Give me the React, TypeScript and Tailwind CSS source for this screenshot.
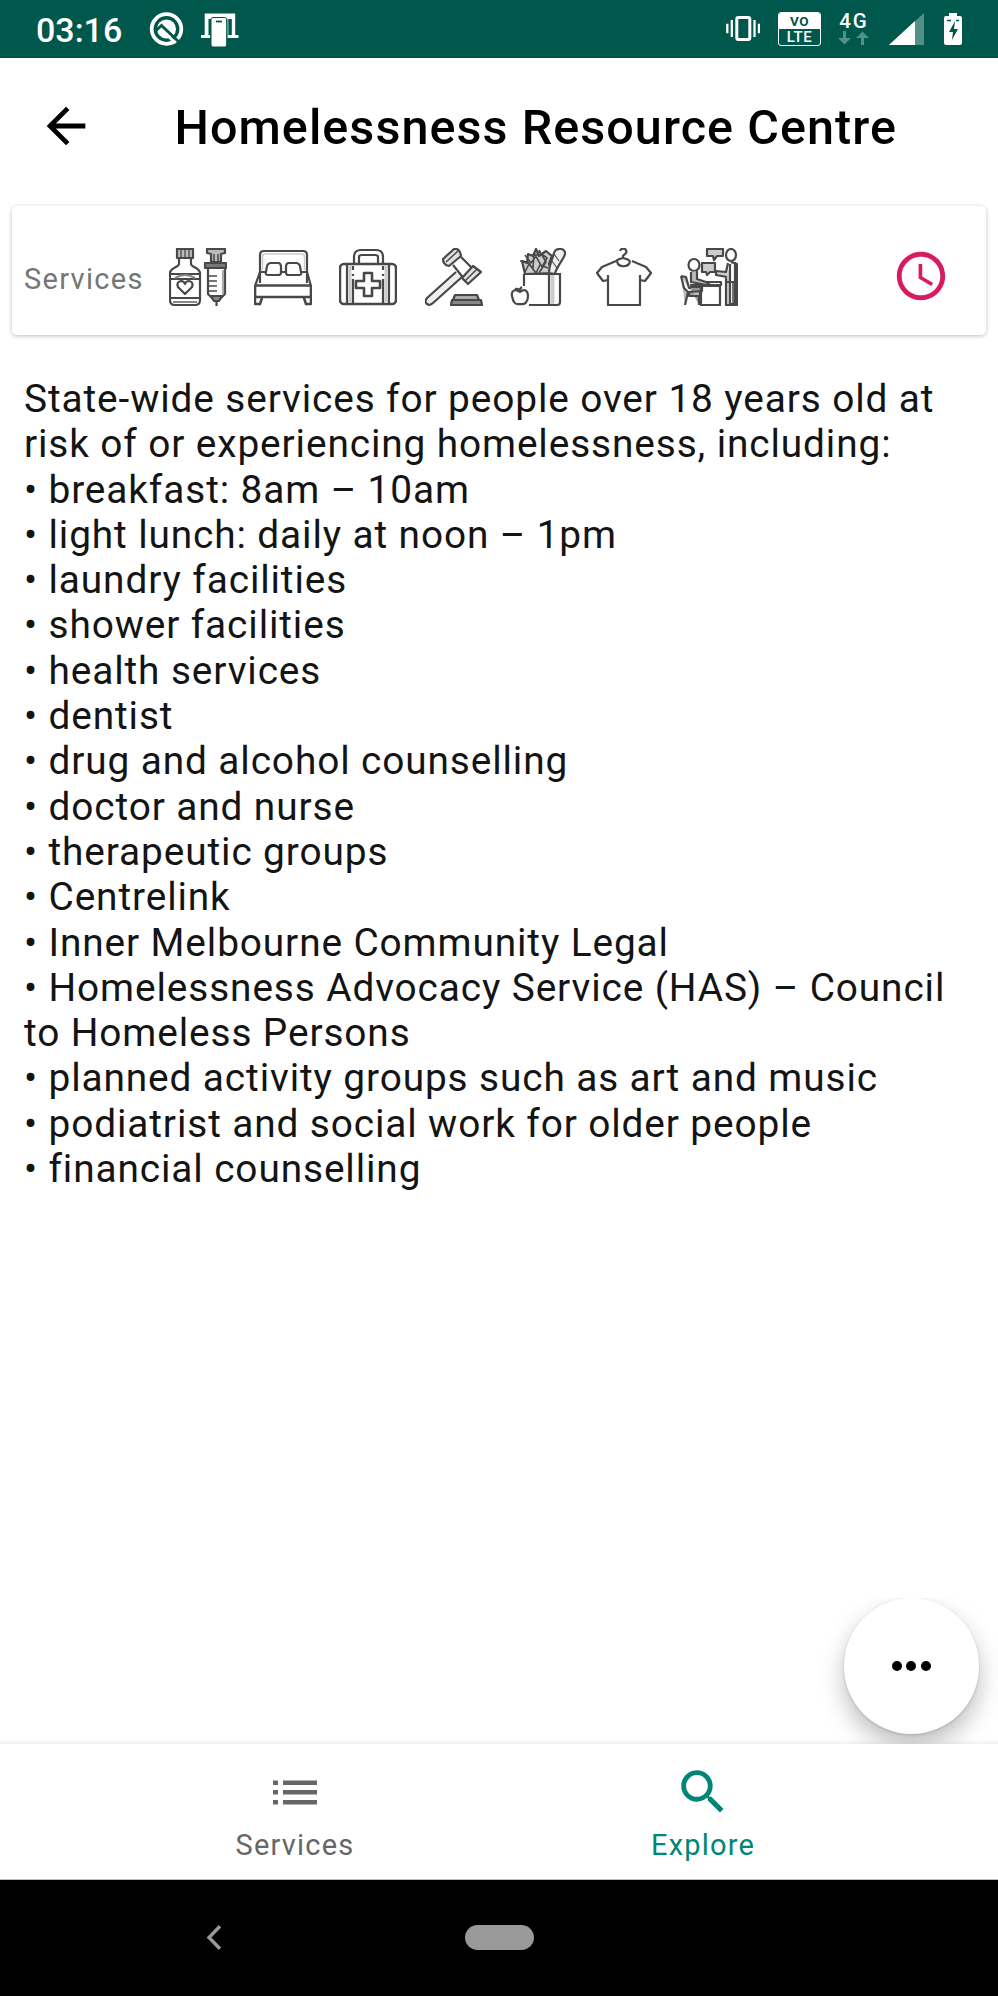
import type { ReactNode } from "react";

const lines = [
  "• breakfast: 8am – 10am",
  "• light lunch: daily at noon – 1pm",
  "• laundry facilities",
  "• shower facilities",
  "• health services",
  "• dentist",
  "• drug and alcohol counselling",
  "• doctor and nurse",
  "• therapeutic groups",
  "• Centrelink",
  "• Inner Melbourne Community Legal",
  "• Homelessness Advocacy Service (HAS) – Council to Homeless Persons",
  "• planned activity groups such as art and music",
  "• podiatrist and social work for older people",
  "• financial counselling",
];

function ServiceIcon({ children }: { children: ReactNode }) {
  return (
    <svg
      width="58"
      height="58"
      viewBox="0 0 58 58"
      fill="none"
      stroke="#484848"
      strokeWidth="2.200"
      strokeLinejoin="round"
      className="shrink-0"
    >
      {children}
    </svg>
  );
}

function Medicine() {
  return (
    <ServiceIcon>
      <path d="M8 1h16v9H8z" fill="#bbb" />
      <path d="M12 2v8M16 2v8M20 2v8" strokeWidth="1.3" />
      <path d="M10 10v6c0 3-9 4-9 9v27q0 5 5 5h20q5 0 5-5V25c0-5-9-6-9-9v-6" />
      <path d="M1 26h30M1 31h30M1 50h30" />
      <path d="M6 30q10-6 20 0M4 54h24" stroke="#888" />
      <path d="M16 46l-7-7q-2-5 3-6 3 0 4 3 1-3 4-3 5 1 3 6z" />
      <path d="M38 1h18v4l-4 1v8H42V6l-4-1z" fill="#bbb" />
      <path d="M45 6v9M49 6v9" strokeWidth="1.5" />
      <path d="M36 15h21v5H36z" fill="#777" />
      <path d="M39 21v25l5 5h7l5-5V21" />
      <path d="M54 22v24" stroke="#aaa" />
      <path d="M40 28h8M40 33h8M40 38h8M40 43h8" strokeWidth="1.7" />
      <path d="M42 48h11l-3 5h-5z" fill="#888" />
      <path d="M47.500 52v6" />
    </ServiceIcon>
  );
}

function Bed() {
  return (
    <ServiceIcon>
      <path d="M6 35V7q0-4 4-4h39q4 0 4 4v28" />
      <path d="M8.500 22V9q0-3 3-3h36q3 0 3 3v13" stroke="#ccc" strokeWidth="1.500" />
      <path d="M7 24h5M27 24h5M47 24h5" />
      <path d="M17 15h7q3 0 3 4v6q0 2-3 2H14q-3 0-2-3l1-6q1-3 4-3zM42 15h-7q-3 0-3 4v6q0 2 3 2h10q3 0 2-3l-1-6q-1-3-4-3z" />
      <path d="M6 24L1 38v11M53 24l4 14v11" />
      <path d="M1 37.500h56M1 49h56M1 38v18h5l2-6M57 38v18h-5l-2-6" strokeWidth="2.500" />
    </ServiceIcon>
  );
}

function FirstAid() {
  return (
    <ServiceIcon>
      <path d="M15 15V9q0-7 7-7h15q7 0 7 7v6M20 15V9q0-2 3-2h13q3 0 3 2v6" />
      <rect x="1" y="16" width="56" height="40" rx="4" strokeWidth="2.500" />
      <path d="M11 17v38M47 17v38" stroke="#ccc" strokeWidth="3" />
      <path d="M8 16v40M50 16v40M14 31v24M44 31v24M14 18v4M14 26v2M44 18v4M44 26v2" />
      <path d="M25 25h8v8h8v7h-8v8h-8v-8h-8v-7h8z" strokeWidth="2.600" />
    </ServiceIcon>
  );
}

function Gavel() {
  return (
    <ServiceIcon>
      <path d="M31 24L2 50q-3 4 0 6 3 2 6-1L37 29" fill="#eee" />
      <path d="M28 17l12 15M36 9l13 13" />
      <path d="M18 11L29 1q6-1 7 7L24 18q-6-1-6-7z" fill="#e2e2e2" />
      <path d="M37 30l11-12 8 6-13 12z" fill="#e2e2e2" />
      <path d="M21 14L33 3M40 33l12-12" strokeWidth="1.500" />
      <path d="M30 47h22l2 5H28z" fill="#aaa" />
      <path d="M27 52h29l1 5H26z" fill="#888" />
    </ServiceIcon>
  );
}

function Groceries() {
  return (
    <ServiceIcon>
      <path d="M14 26v12M50 25v29q0 3-3 3H19M14 26h36M39 26v31" />
      <path d="M42.500 27v29" stroke="#ccc" strokeWidth="4" />
      <path d="M15 26L12 13l5 2 1-9 5 2 3-7 3 7 7-5 6 5-3 8 3 9z" fill="#ccc" />
      <path d="M10 13l8 1 5 7 1-16 8 14 5-9-8-6-8 11-6-8M15 24l4-8 7 9 4-8 8 3M29 2l7 12-7 11" strokeWidth="1.600" />
      <path d="M39 25c0-9 4-15 5-20 2-6 12-5 11 1-1 5-9 13-10 20z" fill="#eee" />
      <path d="M44 6l5 7M42 13l5 7" strokeWidth="1.100" />
      <path d="M10 44c-5-4-9-1-8 4 1 6 3 9 8 8 5 1 8-2 8-8 0-5-3-8-8-4zM10 44q-1-3 2-5M5 41q4-1 5 3" fill="#fff" />
    </ServiceIcon>
  );
}

function Clothing() {
  return (
    <ServiceIcon>
      <path d="M21 13L7 19l-5 6 6 8 5-1v25h32V32l5 1 6-8-5-6-14-6" />
      <path d="M13 32v-5M45 32v-5" />
      <path d="M21 13q2-2 7-3 5 1 7 3M22 13c1 7 12 7 13 0M28 10V8c1-2 5-2 3-6-1-2-5-2-6 1" />
    </ServiceIcon>
  );
}

function Counselling() {
  return (
    <ServiceIcon>
      <path d="M27 1h16v7h-6l-3 4-1-4h-6zM22 15h13v9h-5l-3 3-1-3h-4z" fill="#ccc" />
      <ellipse cx="14" cy="17" rx="5.500" ry="6" />
      <ellipse cx="51" cy="7" rx="5" ry="6" />
      <path d="M11 24v10l15 3 3-2-12-4v-8M1 28l5 1 3 11h11v17M1 28l3 12 4 4-3 13" fill="#bbb" />
      <path d="M10 39h12v4l-13 1v4h10v9" fill="#999" />
      <path d="M10 37h31v-3H25M21 38h19v19H21z" />
      <path d="M55 14v42h-5V16M48 15l-2 9-10-1v4l11 2M46 30v27h11V16l-6-2M46 34h10" fill="#ccc" />
      <path d="M50 35v22M53 35v22" strokeWidth="1.500" />
    </ServiceIcon>
  );
}

function StatusBar() {
  return (
    <header className="flex h-[58px] shrink-0 items-center border-b border-[#00473d] bg-[#00574b] pr-[35px] pl-[36px] text-white">
      <span className="w-[113px] pt-[2px] text-[34px] leading-[40px] font-medium">03:16</span>
      <svg width="36" height="36" viewBox="0 0 36 36" fill="none">
        <circle cx="17.500" cy="18" r="14.800" stroke="white" strokeWidth="3.800" />
        <circle cx="17.500" cy="18" r="9.500" fill="white" />
        <path d="M6.500 20l6-5.500L32 33" stroke="#00574b" strokeWidth="3" />
        <path d="M14 20.500l12.500 11.500" stroke="white" strokeWidth="3" />
      </svg>
      <svg className="ml-[16px]" width="38" height="36" viewBox="0 0 38 36">
        <path d="M3.700 2.500h30.500v21.500h3.300v3H26.500V8H9v19H0v-3h3.700z" fill="white" fillRule="evenodd" />
        <path d="M27.300 8h3.500v16h-3.500zM7.500 8h2v16h-2z" fill="#00574b" />
        <rect x="10" y="6.500" width="15.700" height="29.500" rx="2" fill="white" stroke="#00574b" strokeWidth="1" />
        <path d="M15 10.500h6" stroke="#00574b" strokeWidth="1.800" />
      </svg>
      <div className="grow" />
      <svg width="34" height="25" viewBox="0 0 34 25" fill="none" stroke="white">
        <rect x="10.800" y="1.500" width="13" height="22" rx="1.500" strokeWidth="3" />
        <path d="M1.300 7.700v9.500M5.800 4v17M28.500 4v17M33 7.700v9.500" strokeWidth="2.300" />
      </svg>
      <div className="ml-[18px] flex h-[34px] w-[43px] flex-col overflow-hidden rounded-[3px] border-[1.500px] border-white">
        <div className="flex h-[16px] items-center justify-center bg-white text-[13.500px] leading-[16px] font-bold tracking-[0.500px] text-[#00574b]">VO</div>
        <div className="flex grow items-center justify-center text-[15px] leading-[16px] font-medium tracking-[0.500px]">LTE</div>
      </div>
      <div className="ml-[15px] flex w-[34px] flex-col items-center pt-[1px]">
        <span className="pl-[2px] text-[20.500px] leading-[17px] font-medium tracking-[2px] whitespace-nowrap">4G</span>
        <svg className="mt-[1px]" width="31" height="14" viewBox="0 0 31 14" fill="#529188">
          <path d="M5 0h3v7h5l-6.500 6.500L0 7h5zM23 14h3V7h5l-6.500-6.500L18 7h5z" />
        </svg>
      </div>
      <svg className="ml-[18px]" width="37" height="34" viewBox="0 0 37 34">
        <path d="M1 33L36 1v32z" fill="#529188" />
        <path d="M1 33L27 9v24z" fill="white" />
      </svg>
      <svg className="ml-[18px]" width="20" height="34" viewBox="0 0 20 34">
        <path d="M6 1h8v3h3q2 0 2 2v25q0 2-2 2H3q-2 0-2-2V6q0-2 2-2h3z" fill="white" />
        <path d="M12 9L6 20h4l-1 8 6-11h-4z" fill="#00574b" />
        <path d="M4 8.500h4M13 8.500h3" stroke="#00574b" strokeWidth="1.500" />
      </svg>
    </header>
  );
}

export default function App() {
  return (
    <div className="flex h-[1996px] w-[998px] flex-col overflow-hidden bg-white font-['Roboto',sans-serif]">
      <StatusBar />
      <div className="flex h-[148px] shrink-0 items-center pl-[37px]">
        <svg className="mb-[13px] shrink-0" width="58" height="58" viewBox="0 0 24 24">
          <path d="M20 11H7.830l5.590-5.590L12 4l-8 8 8 8 1.410-1.410L7.830 13H20v-2z" />
        </svg>
        <h1 className="mb-[8px] ml-[79.500px] text-[48.500px] leading-[58px] font-medium tracking-[1.060px] whitespace-nowrap text-black">
          Homelessness Resource Centre
        </h1>
      </div>

      <section className="mx-[12px] flex h-[129px] shrink-0 items-center rounded-[5px] bg-white pr-[36px] pl-[12px] shadow-[0_1px_4px_rgba(0,0,0,0.26)]">
        <span className="mt-[16px] w-[145px] text-[29px] leading-[34px] tracking-[1.300px] text-[#757575]">Services</span>
        <div className="mt-[13px] flex gap-[27.200px]">
          <Medicine />
          <Bed />
          <FirstAid />
          <Gavel />
          <Groceries />
          <Clothing />
          <Counselling />
        </div>
        <svg className="mt-[11px] ml-auto" width="58" height="58" viewBox="0 0 24 24" fill="#d81b60">
          <path d="M11.990 2C6.470 2 2 6.480 2 12s4.470 10 9.990 10C17.520 22 22 17.520 22 12S17.520 2 11.990 2zM12 20c-4.420 0-8-3.580-8-8s3.580-8 8-8 8 3.580 8 8-3.580 8-8 8z" />
          <path d="M12.500 7H11v6l5.250 3.150.75-1.230-4.500-2.670z" />
        </svg>
      </section>

      <main className="relative grow overflow-hidden pt-[41px] pr-[24px] pl-[24px] text-[38.800px] leading-[45.300px] tracking-[0.890px] text-[#141414]">
        <p>State-wide services for people over 18 years old at risk of or experiencing homelessness, including:</p>
        {lines.map((line) => (
          <p key={line}>{line}</p>
        ))}
        <div className="absolute right-0 bottom-0 h-[146px] w-[200px] overflow-hidden">
          <button className="absolute top-0 right-[19px] flex size-[135.500px] items-center justify-center gap-[4.800px] rounded-full bg-white shadow-[0_12px_24px_rgba(0,0,0,0.26),0_1px_3px_rgba(0,0,0,0.14)]">
            <i className="size-[9.800px] rounded-full bg-black" />
            <i className="size-[9.800px] rounded-full bg-black" />
            <i className="size-[9.800px] rounded-full bg-black" />
          </button>
        </div>
        <div className="absolute inset-x-0 bottom-0 h-[6px] bg-linear-to-b from-transparent to-black/5" />
      </main>

      <nav className="flex h-[136px] shrink-0 justify-center border-b border-[#bdbdbd] bg-white text-[29px] leading-[34px] tracking-[1.200px]">
        <div className="flex w-[408px] flex-col items-center text-[#666]">
          <svg className="mt-[19px]" width="58" height="58" viewBox="0 0 58 58" fill="#666">
            <path d="M7 17.500h5v4.500H7zM7 27h5v4.500H7zM7 37h5v4.500H7zM17 17.500h34v4.500H17zM17 27h34v4.500H17zM17 37h34v4.500H17z" />
          </svg>
          <span className="mt-[7px]">Services</span>
        </div>
        <div className="flex w-[408px] flex-col items-center text-[#008577]">
          <svg className="mt-[19px]" width="58" height="58" viewBox="0 0 24 24" fill="#008577">
            <path d="M15.500 14h-.79l-.28-.27C15.410 12.590 16 11.110 16 9.500 16 5.910 13.090 3 9.500 3S3 5.910 3 9.500 5.910 16 9.500 16c1.610 0 3.090-.59 4.230-1.570l.27.28v.79l5 4.990L20.490 19l-4.990-5zm-6 0C7.010 14 5 11.990 5 9.500S7.010 5 9.500 5 14 7.010 14 9.500 11.990 14 9.500 14z" />
          </svg>
          <span className="mt-[7px]">Explore</span>
        </div>
      </nav>

      <footer className="flex h-[116px] shrink-0 items-center bg-black pb-[1px] pl-[206px]">
        <svg width="16" height="25" viewBox="0 0 16 25" fill="none" stroke="#999" strokeWidth="3.400">
          <path d="M14 1.200L3 12.500 14 23.800" />
        </svg>
        <div className="ml-[242.500px] h-[25px] w-[69px] rounded-full bg-[#999]" />
      </footer>
    </div>
  );
}
